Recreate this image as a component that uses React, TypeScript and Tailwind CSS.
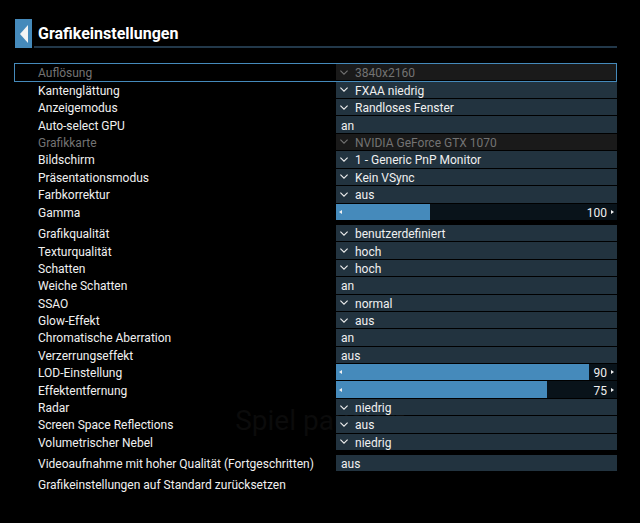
import React, { useState } from 'react';
import { clsx } from 'clsx';

type Setting = {
  id: string;
  label: string;
  kind: 'select' | 'toggle' | 'slider';
  value: string | number;
  max?: number;
  disabled?: boolean;
};

const DISPLAY: Setting[] = [
  { id: 'resolution', label: 'Auflösung', kind: 'select', value: '3840x2160', disabled: true },
  { id: 'antialiasing', label: 'Kantenglättung', kind: 'select', value: 'FXAA niedrig' },
  { id: 'window-mode', label: 'Anzeigemodus', kind: 'select', value: 'Randloses Fenster' },
  { id: 'auto-gpu', label: 'Auto-select GPU', kind: 'toggle', value: 'an' },
  { id: 'gpu', label: 'Grafikkarte', kind: 'select', value: 'NVIDIA GeForce GTX 1070', disabled: true },
  { id: 'monitor', label: 'Bildschirm', kind: 'select', value: '1 - Generic PnP Monitor' },
  { id: 'vsync', label: 'Präsentationsmodus', kind: 'select', value: 'Kein VSync' },
  { id: 'color', label: 'Farbkorrektur', kind: 'select', value: 'aus' },
  { id: 'gamma', label: 'Gamma', kind: 'slider', value: 100, max: 300 },
];

const QUALITY: Setting[] = [
  { id: 'quality', label: 'Grafikqualität', kind: 'select', value: 'benutzerdefiniert' },
  { id: 'textures', label: 'Texturqualität', kind: 'select', value: 'hoch' },
  { id: 'shadows', label: 'Schatten', kind: 'select', value: 'hoch' },
  { id: 'soft-shadows', label: 'Weiche Schatten', kind: 'toggle', value: 'an' },
  { id: 'ssao', label: 'SSAO', kind: 'select', value: 'normal' },
  { id: 'glow', label: 'Glow-Effekt', kind: 'select', value: 'aus' },
  { id: 'aberration', label: 'Chromatische Aberration', kind: 'toggle', value: 'an' },
  { id: 'distortion', label: 'Verzerrungseffekt', kind: 'toggle', value: 'aus' },
  { id: 'lod', label: 'LOD-Einstellung', kind: 'slider', value: 90, max: 100 },
  { id: 'effect-distance', label: 'Effektentfernung', kind: 'slider', value: 75, max: 100 },
  { id: 'radar', label: 'Radar', kind: 'select', value: 'niedrig' },
  { id: 'ssr', label: 'Screen Space Reflections', kind: 'select', value: 'aus' },
  { id: 'fog', label: 'Volumetrischer Nebel', kind: 'select', value: 'niedrig' },
];

const CAPTURE: Setting[] = [
  { id: 'capture', label: 'Videoaufnahme mit hoher Qualität (Fortgeschritten)', kind: 'toggle', value: 'aus' },
];

function SelectField({ setting }: { setting: Setting }) {
  return (
    <div
      className={clsx(
        'relative flex items-center',
        setting.disabled ? 'bg-[#1a1a1a] text-[#737373]' : 'bg-[#22333f] text-[#f0f0f0]'
      )}
    >
      <select
        id={setting.id}
        disabled={setting.disabled}
        defaultValue={setting.value}
        className="h-4 w-full appearance-none bg-transparent pt-px pl-[19px] leading-4 outline-none disabled:opacity-100"
      >
        <option>{setting.value}</option>
      </select>
      <svg
        viewBox="0 0 8 5"
        className="pointer-events-none absolute left-1 h-[5px] w-2"
        fill="none"
        stroke="currentColor"
        strokeWidth="1.1"
      >
        <path d="M0.4 0.6 4 4.2 7.6 0.6" />
      </svg>
    </div>
  );
}

function ToggleField({ setting }: { setting: Setting }) {
  const [value, setValue] = useState(setting.value);

  return (
    <button
      id={setting.id}
      type="button"
      onClick={() => setValue(value === 'an' ? 'aus' : 'an')}
      className="flex items-center bg-[#22333f] px-[5px] pt-0.5 leading-[14px] text-[#f0f0f0]"
    >
      {value}
    </button>
  );
}

function SliderField({ setting }: { setting: Setting }) {
  const max = setting.max ?? 100;
  const [value, setValue] = useState(Number(setting.value));
  const percent = (value / max) * 100;

  return (
    <div className="relative flex bg-[#09131a] text-[#f0f0f0]">
      <input
        id={setting.id}
        type="range"
        min={0}
        max={max}
        value={value}
        onChange={(e) => setValue(Number(e.target.value))}
        style={{ backgroundImage: `linear-gradient(to right, #458abb ${percent}%, transparent ${percent}%)` }}
        className="w-full appearance-none outline-none [&::-webkit-slider-thumb]:opacity-0"
      />
      <div className="pointer-events-none absolute inset-0 flex items-center justify-between px-[3px]">
        <svg viewBox="0 0 3 4" className="h-1 w-[3px]" fill="currentColor">
          <path d="M3 0v4L0 2z" />
        </svg>
        <span className="flex items-center gap-1">
          <span className="pt-0.5 leading-[14px]">{value}</span>
          <svg viewBox="0 0 3 4" className="h-1 w-[3px]" fill="currentColor">
            <path d="M0 0v4l3-2z" />
          </svg>
        </span>
      </div>
    </div>
  );
}

function SettingRow({ setting, active }: { setting: Setting; active?: boolean }) {
  return (
    <div className="relative grid grid-cols-[298fr_281fr] pl-6">
      <label
        htmlFor={setting.id}
        className={clsx(
          'flex items-center pt-0.5 leading-[14px]',
          setting.disabled ? 'text-[#737373]' : 'text-[#f0f0f0]'
        )}
      >
        {setting.label}
      </label>
      {setting.kind === 'select' && <SelectField setting={setting} />}
      {setting.kind === 'toggle' && <ToggleField setting={setting} />}
      {setting.kind === 'slider' && <SliderField setting={setting} />}
      {active && (
        <div className="pointer-events-none absolute inset-x-0 -top-px -bottom-0.5 z-10 border border-[#458abb]" />
      )}
    </div>
  );
}

export default function App() {
  const active = 'resolution';

  return (
    <main className="relative min-h-screen bg-black pt-[19px] pr-[23px] pb-6 pl-[14px] font-['Roboto',sans-serif] text-[12px] text-[#f0f0f0]">
      {/* pause notice of the running game, dimmed behind the menu */}
      <p className="absolute inset-x-0 top-[405px] text-center text-[28px] leading-8 text-[#0b0b0b]">Spiel pausiert</p>

      <header className="flex gap-0.5 pl-px">
        <button
          type="button"
          aria-label="Zurück"
          className="flex h-[29px] w-[17px] items-center justify-center bg-[#458abb]"
        >
          <svg viewBox="0 0 8 18" className="h-[18px] w-2" fill="#f4f4f4">
            <path d="M8 0v18L0 9z" />
          </svg>
        </button>
        <h1 className="flex flex-1 items-center border-b-2 border-[#22384a] pt-0.5 pl-1 text-[16px] leading-5 font-bold text-white">
          Grafikeinstellungen
        </h1>
      </header>

      <form className="relative mt-4 flex flex-col gap-[5px]">
        <div className="grid min-h-[156px] auto-rows-fr gap-px">
          {DISPLAY.map((s) => (
            <SettingRow key={s.id} setting={s} active={s.id === active} />
          ))}
        </div>
        <div className="grid min-h-[225px] auto-rows-fr gap-px">
          {QUALITY.map((s) => (
            <SettingRow key={s.id} setting={s} />
          ))}
        </div>
        <div className="grid gap-px">
          {CAPTURE.map((s) => (
            <SettingRow key={s.id} setting={s} />
          ))}
        </div>
        <button type="button" className="self-start pt-0.5 pl-6 text-left leading-[14px]">
          Grafikeinstellungen auf Standard zurücksetzen
        </button>
      </form>
    </main>
  );
}
